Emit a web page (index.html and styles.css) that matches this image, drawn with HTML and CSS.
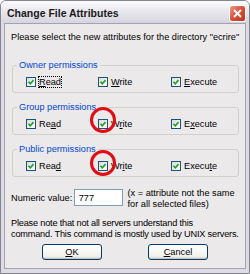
FILE: index.html
```html
<!DOCTYPE html>
<html>
<head>
	<title>Change File Attributes</title>
	<link rel="stylesheet" href="styles.css">
</head>
<body>
	<div class="window">
		<div class="titlebar">
			<span class="title">Change File Attributes</span>
			<span class="close">
				<svg width="15" height="15" viewBox="0 0 15 15">
					<line x1="4" y1="4" x2="11" y2="11" stroke="#fff" stroke-width="2"/>
					<line x1="11" y1="4" x2="4" y2="11" stroke="#fff" stroke-width="2"/>
				</svg>
			</span>
		</div>
		<div class="content">
			<p class="intro">Please select the new attributes for the directory "ecrire"</p>

			<fieldset class="group">
				<legend>Owner permissions</legend>
				<div class="checks">
					<label class="check"><span class="box"></span><span class="focus"><u>R</u>ead</span></label>
					<label class="check"><span class="box"></span><span><u>W</u>rite</span></label>
					<label class="check"><span class="box"></span><span><u>E</u>xecute</span></label>
				</div>
			</fieldset>

			<fieldset class="group">
				<legend>Group permissions</legend>
				<div class="checks">
					<label class="check"><span class="box"></span><span>Re<u>a</u>d</span></label>
					<label class="check"><span class="box"></span><span>W<u>r</u>ite</span></label>
					<label class="check"><span class="box"></span><span>E<u>x</u>ecute</span></label>
				</div>
			</fieldset>

			<fieldset class="group">
				<legend>Public permissions</legend>
				<div class="checks">
					<label class="check"><span class="box"></span><span>Rea<u>d</u></span></label>
					<label class="check"><span class="box"></span><span>Wr<u>i</u>te</span></label>
					<label class="check"><span class="box"></span><span>Execu<u>t</u>e</span></label>
				</div>
			</fieldset>

			<div class="numeric">
				<span class="num-label">Numeric value:</span>
				<span class="num-input">777</span>
				<span class="num-hint">(x = attribute not the same for all selected files)</span>
			</div>

			<p class="note">Please note that not all servers understand this<br>command. This command is mostly used by UNIX servers.</p>

			<div class="buttons">
				<span class="btn"><u>O</u>K</span>
				<span class="btn"><u>C</u>ancel</span>
			</div>
		</div>

		<!-- red marks drawn over the screenshot -->
		<span class="mark mark-group"></span>
		<span class="mark mark-public"></span>
	</div>
</body>
</html>
```

FILE: styles.css
```css
body {
	margin: 0;
	padding: 0;
	background-color: #fff;
	font-family: "Liberation Sans", Arial, sans-serif;
	font-size: 9.2px;
	line-height: 10px;
	color: #000;
}
.window {
	position: relative;
	width: 250px;
	height: 274px;
	box-sizing: border-box;
	background-color: #dddce4;
	border: 1px solid #85848f;
	border-radius: 6px 6px 0 0;
	padding: 0 3px 4px 3px;
	display: flex;
	flex-direction: column;
	overflow: hidden;
}
.titlebar {
	height: 22px;
	flex: none;
	margin: 0 -3px;
	padding: 0 3px 0 6px;
	display: flex;
	align-items: center;
	justify-content: space-between;
	background: linear-gradient(#fdfdfe, #eceaf0 40%, #d6d4de);
}
.title {
	font-weight: bold;
	font-size: 10.5px;
	color: #1a1a1a;
	margin-top: 1px;
}
.close {
	width: 17px;
	height: 17px;
	margin-top: 3px;
	border-radius: 3px;
	border: 1px solid #fff;
	box-sizing: border-box;
	background: linear-gradient(135deg, #ee9a88, #d9503a 50%, #b8331f);
	display: flex;
	align-items: center;
	justify-content: center;
}
.close svg {
	display: block;
}
.content {
	flex: 1;
	background-color: #ece9ea;
	border: 1px solid #a4a2ae;
	padding: 0 6px;
}
.intro {
	margin: 8px 0 0 0;
	white-space: nowrap;
}
.group {
	margin: 9px 0 0 1px;
	padding: 7px 0 5px 0;
	border: 1px solid #d3d0cc;
	border-radius: 3px;
	min-width: 0;
}
.intro + .group {
	margin-top: 18px;
}
.group legend {
	color: #0046d5;
	padding: 0 2px;
	margin-left: 4px;
	line-height: 10px;
}
.checks {
	display: grid;
	grid-template-columns: 72px 73px 1fr;
	padding-left: 13px;
}
.check {
	display: flex;
	align-items: center;
	gap: 3px;
	height: 10px;
}
.box {
	width: 10px;
	height: 10px;
	box-sizing: border-box;
	border: 1px solid #1c5180;
	background-image: url("data:image/svg+xml;utf8,<svg xmlns='http://www.w3.org/2000/svg' width='8' height='8'><path d='M1.5 3.8l1.8 1.9 3.2-3.6' fill='none' stroke='%2321a121' stroke-width='1.6'/></svg>"), linear-gradient(135deg, #dcdcd6, #fff);
	background-repeat: no-repeat;
}
.focus {
	outline: 1px dotted #000;
	outline-offset: 0;
}
.numeric {
	display: flex;
	align-items: flex-start;
	margin: 11px 0 0 0;
}
.num-label {
	margin-top: 5px;
	width: 63px;
}
.num-input {
	width: 49px;
	height: 17px;
	box-sizing: border-box;
	border: 1px solid #7f9db9;
	background-color: #fff;
	padding: 3px 4px;
	margin-top: 1px;
}
.num-hint {
	margin-left: 5px;
	width: 112px;
	line-height: 11px;
}
.note {
	margin: 8px 0 0 0;
	line-height: 11px;
	white-space: nowrap;
	letter-spacing: -0.2px;
}
.buttons {
	display: flex;
	gap: 46px;
	margin: 4px 0 0 31px;
}
.btn {
	width: 60px;
	height: 16px;
	box-sizing: border-box;
	border: 1px solid #003c74;
	border-radius: 3px;
	background: linear-gradient(#fff, #f2f1ec 80%, #d8d2c6);
	box-shadow: inset 0 -1px 0 #c8c2b8;
	text-align: center;
	line-height: 14px;
}
.mark {
	position: absolute;
	width: 26px;
	height: 26px;
	box-sizing: border-box;
	border: 3px solid #e10d12;
	border-radius: 50%;
}
.mark-group {
	left: 89px;
	top: 106px;
}
.mark-public {
	left: 89px;
	top: 149px;
}
```
